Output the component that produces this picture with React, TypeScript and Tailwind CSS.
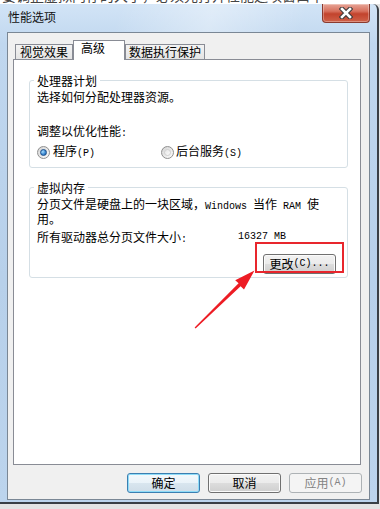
import React from "react";

// half-width ASCII inside Chinese text (SimSun style 6px cells)
function A({ children }: { children: React.ReactNode }) {
  return <span className="font-['Liberation_Mono',monospace] text-[10px]">{children}</span>;
}

function Radio({ checked }: { checked?: boolean }) {
  return (
    <span className="flex h-[13px] w-[13px] items-center justify-center rounded-full border border-[#8f8f8f] bg-[linear-gradient(135deg,#d4d4d4,#fcfcfc)]">
      {checked ? (
        <span className="h-[7px] w-[7px] rounded-full border border-[#1b4f8c] bg-[radial-gradient(circle_at_35%_35%,#a6dcfc,#3d8ad3_55%,#1d5a9e)]" />
      ) : (
        <span className="h-[7px] w-[7px] rounded-full border border-[#d0d0d0] bg-[linear-gradient(135deg,#e6e6e6,#fafafa)]" />
      )}
    </span>
  );
}

function Group({
  title,
  className,
  children,
}: {
  title: string;
  className: string;
  children: React.ReactNode;
}) {
  return (
    <div className={`relative rounded-[3px] border border-[#d5dfe5] ${className}`}>
      <span className="absolute -top-[8px] left-[4px] bg-white px-[3px] leading-[16px]">{title}</span>
      {children}
    </div>
  );
}

function Button({
  children,
  kind = "normal",
  className = "",
}: {
  children: React.ReactNode;
  kind?: "normal" | "default" | "disabled";
  className?: string;
}) {
  const look =
    kind === "default"
      ? "border-[#3c7fb1] shadow-[inset_0_0_0_1px_#8fdcf8] bg-[linear-gradient(180deg,#f4f9fc_0%,#eaf3f9_50%,#d9e6ef_50%,#cfdde8_100%)] text-black"
      : kind === "disabled"
      ? "border-[#adb2b5] bg-[#f4f4f4] text-[#838383]"
      : "border-[#707070] shadow-[inset_0_0_0_1px_#fbfbfb] bg-[linear-gradient(180deg,#f2f2f2_0%,#ebebeb_50%,#dddddd_50%,#cfcfcf_100%)] text-black";
  return (
    <div
      className={`flex h-[20px] w-[73px] items-center justify-center rounded-[3px] border leading-[16px] ${look} ${className}`}
    >
      {children}
    </div>
  );
}

export default function App() {
  return (
    <div className="relative h-[509px] w-[380px] overflow-hidden bg-[#e4e4e4] font-['Noto_Sans_CJK_SC',sans-serif] text-[12px] text-black">
      {/* window behind, only a sliver visible */}
      <div className="h-[4px] overflow-hidden bg-white">
        <div className="-mt-[12px] whitespace-nowrap pl-[2px] text-[14px] leading-[14px] text-[#444]">
          要调整虚拟内存的大小，必须先打开性能选项窗口中
        </div>
      </div>

      {/* window frame */}
      <div className="flex h-[500px] w-[379px] flex-col rounded-tr-[6px] border-r-2 border-b-2 border-[#3a3f45] bg-[linear-gradient(180deg,#d2e4f6_0%,#c0d7ef_8%,#b7d0ea_55%,#bcd4ed_100%)] pl-[7px]">
        {/* title bar */}
        <div className="flex h-[28px] items-start justify-between bg-[linear-gradient(105deg,transparent_30%,rgba(255,255,255,0.35)_55%,transparent_80%)] pl-[1px] pr-[7px]">
          <span className="mt-[5px] leading-[16px] text-[#111]">性能选项</span>
          <div className="flex h-[19px] w-[48px] items-center justify-center rounded-b-[4px] border border-t-0 border-[#8a3a2e] bg-[linear-gradient(180deg,#e7a597_0%,#d7705d_40%,#c2432d_55%,#cf6149_100%)] shadow-[inset_0_0_0_1px_rgba(255,255,255,0.3)]">
            <svg width="14" height="12" viewBox="0 0 14 12">
              <path d="M3 2 L11 10 M11 2 L3 10" stroke="#3a3a3a" strokeWidth="4.6" strokeLinecap="square" />
              <path d="M3 2 L11 10 M11 2 L3 10" stroke="#ffffff" strokeWidth="2.6" strokeLinecap="square" />
            </svg>
          </div>
        </div>

        {/* client area */}
        <div className="flex h-[468px] w-[363px] flex-col border border-[#7a8795] bg-[#f0f0f0]">
          {/* tabs */}
          <div className="ml-[7px] mt-[7px] flex items-end">
            <div className="h-[15px] w-[58px] border border-b-0 border-[#898c95] bg-[linear-gradient(180deg,#f3f3f3,#e4e4e4)] text-center leading-[14px]">
              视觉效果
            </div>
            <div className="relative z-10 -mb-px h-[20px] w-[52px] border border-b-0 border-[#898c95] bg-white pl-[7px] leading-[14px]">
              高级
            </div>
            <div className="h-[15px] w-[80px] border border-b-0 border-[#898c95] bg-[linear-gradient(180deg,#f3f3f3,#e4e4e4)] text-center leading-[14px]">
              数据执行保护
            </div>
          </div>

          {/* tab panel */}
          <div className="ml-[5px] h-[406px] w-[348px] border border-[#898c95] bg-white">
            <Group title="处理器计划" className="ml-[15px] mt-[20px] h-[88px] w-[319px] pl-[7px] pt-[8px]">
              <div className="leading-[15px]">选择如何分配处理器资源。</div>
              <div className="mt-[19px] leading-[16px]">
                调整以优化性能<A>:</A>
              </div>
              <div className="mt-[2px] flex h-[16px] items-center">
                <div className="flex w-[124px] items-center gap-[3px]">
                  <Radio checked />
                  <span className="leading-[16px]">
                    程序<A>(P)</A>
                  </span>
                </div>
                <div className="flex items-center gap-[2px]">
                  <Radio />
                  <span className="leading-[16px]">
                    后台服务<A>(S)</A>
                  </span>
                </div>
              </div>
            </Group>

            <Group title="虚拟内存" className="ml-[15px] mt-[19px] h-[91px] w-[319px] pl-[7px] pt-[10px]">
              <div className="whitespace-nowrap leading-[12px]">
                分页文件是硬盘上的一块区域，<A>Windows </A>当作<A> RAM </A>使
                <br />
                用。
              </div>
              <div className="mt-[4px] flex leading-[16px]">
                <span className="w-[201px]">
                  所有驱动器总分页文件大小<A>:</A>
                </span>
                <A>16327 MB</A>
              </div>
              <div className="mt-[6px] flex justify-end pr-[11px]">
                <Button>
                  更改<A>(C)...</A>
                </Button>
              </div>
            </Group>
          </div>

          {/* dialog buttons */}
          <div className="mt-[8px] flex justify-end gap-[8px] pr-[7px]">
            <Button kind="default">确定</Button>
            <Button>取消</Button>
            <Button kind="disabled">
              应用<A>(A)</A>
            </Button>
          </div>
        </div>
      </div>

      {/* annotation: red box and arrow */}
      <div className="pointer-events-none absolute left-[255px] top-[242px] h-[31px] w-[89px] border-2 border-[#e8262d]" />
      <svg className="pointer-events-none absolute left-0 top-0" width="380" height="509" viewBox="0 0 380 509">
        <polygon
          points="195.6,328.4 240.6,286.3 244,289.6 254.5,270.5 235.2,280.2 238.6,283.3 194.6,327.6"
          fill="#ed1c24"
        />
      </svg>
    </div>
  );
}
